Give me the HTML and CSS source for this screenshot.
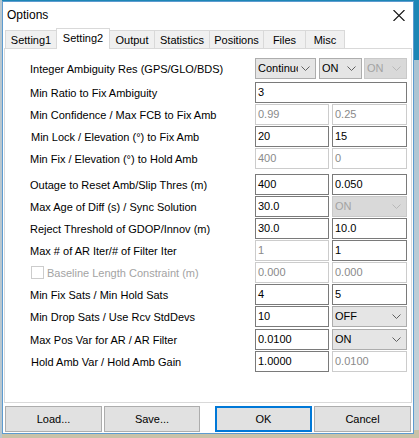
FILE: index.html
```html
<!DOCTYPE html>
<html>
<head>
<meta charset="utf-8">
<title>Options</title>
<link rel="stylesheet" href="styles.css">
</head>
<body>
<div class="window">
  <div class="titlebar">
    <span class="title">Options</span>
    <svg class="close" width="12" height="11" viewBox="0 0 12 11"><path d="M0.5 0 L11.5 11 M11.5 0 L0.5 11" stroke="#111" stroke-width="1.1" fill="none"/></svg>
  </div>
  <div class="tabs">
    <div class="tab w51">Setting1</div>
    <div class="tab active w54">Setting2</div>
    <div class="tab w44">Output</div>
    <div class="tab w55">Statistics</div>
    <div class="tab w54">Positions</div>
    <div class="tab w42">Files</div>
    <div class="tab w40">Misc</div>
  </div>
  <div class="panel">
    <div class="row">
      <span class="label">Integer Ambiguity Res (GPS/GLO/BDS)</span>
      <div class="ctrls three">
        <div class="combo w61"><span class="ctext">Continuous</span><svg class="chev" width="9" height="5" viewBox="0 0 9 5"><path d="M0.5 0.5 L4.5 4.5 L8.5 0.5" stroke="#606060" fill="none"/></svg></div>
        <div class="combo w43 ml3"><span class="ctext">ON</span><svg class="chev" width="9" height="5" viewBox="0 0 9 5"><path d="M0.5 0.5 L4.5 4.5 L8.5 0.5" stroke="#606060" fill="none"/></svg></div>
        <div class="combo dis w43 ml2"><span class="ctext">ON</span><svg class="chev" width="9" height="5" viewBox="0 0 9 5"><path d="M0.5 0.5 L4.5 4.5 L8.5 0.5" stroke="#b8b8b8" fill="none"/></svg></div>
      </div>
    </div>
    <div class="row gap4">
      <span class="label">Min Ratio to Fix Ambiguity</span>
      <div class="ctrls"><div class="edit full">3</div></div>
    </div>
    <div class="row">
      <span class="label">Min Confidence / Max FCB to Fix Amb</span>
      <div class="ctrls two"><div class="edit dis">0.99</div><div class="edit dis">0.25</div></div>
    </div>
    <div class="row">
      <span class="label ind">Min Lock / Elevation (°) to Fix Amb</span>
      <div class="ctrls two"><div class="edit">20</div><div class="edit">15</div></div>
    </div>
    <div class="row">
      <span class="label">Min Fix / Elevation (°) to Hold Amb</span>
      <div class="ctrls two"><div class="edit dis">400</div><div class="edit dis">0</div></div>
    </div>
    <div class="row gap6">
      <span class="label">Outage to Reset Amb/Slip Thres (m)</span>
      <div class="ctrls two"><div class="edit">400</div><div class="edit">0.050</div></div>
    </div>
    <div class="row">
      <span class="label">Max Age of Diff (s) / Sync Solution</span>
      <div class="ctrls two"><div class="edit">30.0</div><div class="combo dis"><span class="ctext">ON</span><svg class="chev" width="9" height="5" viewBox="0 0 9 5"><path d="M0.5 0.5 L4.5 4.5 L8.5 0.5" stroke="#b8b8b8" fill="none"/></svg></div></div>
    </div>
    <div class="row">
      <span class="label">Reject Threshold of GDOP/Innov (m)</span>
      <div class="ctrls two"><div class="edit">30.0</div><div class="edit">10.0</div></div>
    </div>
    <div class="row">
      <span class="label">Max # of AR Iter/# of Filter Iter</span>
      <div class="ctrls two"><div class="edit dis">1</div><div class="edit">1</div></div>
    </div>
    <div class="row">
      <span class="label dlabel"><span class="check"></span>Baseline Length Constraint (m)</span>
      <div class="ctrls two"><div class="edit dis">0.000</div><div class="edit dis">0.000</div></div>
    </div>
    <div class="row">
      <span class="label">Min Fix Sats / Min Hold Sats</span>
      <div class="ctrls two"><div class="edit">4</div><div class="edit">5</div></div>
    </div>
    <div class="row">
      <span class="label">Min Drop Sats / Use Rcv StdDevs</span>
      <div class="ctrls two"><div class="edit">10</div><div class="combo"><span class="ctext">OFF</span><svg class="chev" width="9" height="5" viewBox="0 0 9 5"><path d="M0.5 0.5 L4.5 4.5 L8.5 0.5" stroke="#606060" fill="none"/></svg></div></div>
    </div>
    <div class="row gap3">
      <span class="label">Max Pos Var for AR / AR Filter</span>
      <div class="ctrls two"><div class="edit">0.0100</div><div class="combo"><span class="ctext">ON</span><svg class="chev" width="9" height="5" viewBox="0 0 9 5"><path d="M0.5 0.5 L4.5 4.5 L8.5 0.5" stroke="#606060" fill="none"/></svg></div></div>
    </div>
    <div class="row">
      <span class="label ind">Hold Amb Var / Hold Amb Gain</span>
      <div class="ctrls two"><div class="edit">1.0000</div><div class="edit dis">0.0100</div></div>
    </div>
  </div>
  <div class="buttons">
    <button class="btn w97">Load...</button>
    <button class="btn w96 ml2">Save...</button>
    <button class="btn w97 default ml15">OK</button>
    <button class="btn w97 ml2">Cancel</button>
  </div>
</div>
</body>
</html>
```
FILE: styles.css
```css
* { box-sizing: border-box; }
html, body { margin: 0; padding: 0; }
body {
  width: 419px;
  height: 438px;
  overflow: hidden;
  font-family: "Liberation Sans", Arial, sans-serif;
  font-size: 11px;
  color: #000;
  background: linear-gradient(to right, #b9c7cf 0, #b9c7cf 2px, transparent 2px),
              linear-gradient(to bottom, #1d86b5 0, #1d86b5 60px, #a9c3d2 60px, #c8d3d8 430px, #c9c2a8 430px);
}
.window {
  margin: 1px 0 0 2px;
  width: 412px;
  height: 433px;
  border: 1px solid #5d9bd0;
  background: #fff;
  display: flex;
  flex-direction: column;
}
.titlebar {
  height: 26px;
  flex: none;
  display: flex;
  align-items: center;
  justify-content: space-between;
  padding: 0 8px 0 4px;
}
.title { font-size: 12px; }
.close { display: block; }
.tabs {
  height: 20px;
  flex: none;
  display: flex;
  padding-left: 2px;
  position: relative;
  z-index: 1;
}
.tab {
  margin-top: 2px;
  height: 18px;
  border: 1px solid #d9d9d9;
  border-bottom: none;
  border-right: none;
  background: #f0f0f0;
  text-align: center;
  padding-top: 3px;
  line-height: 13px;
}
.tab:last-child { border-right: 1px solid #d9d9d9; }
.tab.active {
  margin-top: 0;
  height: 21px;
  background: #fff;
  border-right: 1px solid #d9d9d9;
  padding-top: 3px;
}
.tab.active + .tab { border-left: none; }
.w40 { width: 40px; } .w42 { width: 42px; } .w43 { width: 43px; } .w44 { width: 44px; }
.w51 { width: 51px; } .w54 { width: 54px; } .w55 { width: 55px; } .w61 { width: 61px; }
.w96 { width: 96px; } .w97 { width: 97px; }
.ml2 { margin-left: 2px; } .ml3 { margin-left: 3px; } .ml15 { margin-left: 15px; }
.panel {
  margin: 0 1px;
  height: 355px;
  flex: none;
  border: 1px solid #d9d9d9;
  background: #fff;
  padding: 9px 4px 0 25px;
}
.row {
  display: flex;
  align-items: center;
  justify-content: space-between;
  height: 21px;
  margin-bottom: 1px;
}
.gap4 { margin-top: 3px; }
.gap6 { margin-top: 5px; }
.gap3 { margin-top: 2px; }
.label { white-space: nowrap; }
.ind { padding-left: 1px; }
.dlabel { color: #a3a3a3; display: flex; align-items: center; padding-left: 1px; }
.check {
  width: 13px;
  height: 13px;
  border: 1px solid #cccccc;
  background: #fff;
  margin-right: 3px;
}
.ctrls {
  width: 152px;
  height: 21px;
  display: flex;
}
.ctrls.two { display: grid; grid-template-columns: 74px 75px; column-gap: 3px; }
.edit {
  height: 21px;
  border: 1px solid #7a7a7a;
  background: #fff;
  padding: 0 2px;
  line-height: 19px;
  white-space: nowrap;
  overflow: hidden;
}
.edit.full { width: 152px; }
.edit.dis { border-color: #cccccc; color: #8a8a8a; }
.combo {
  height: 21px;
  border: 1px solid #adadad;
  background: #e5e5e5;
  display: flex;
  align-items: center;
  padding: 0 5px 0 2px;
  line-height: 19px;
}
.combo.dis { border-color: #c9c9c9; background: #d9d9d9; color: #a3a3a3; }
.ctext { flex: 1; overflow: hidden; white-space: nowrap; min-width: 0; }
.chev { display: block; flex: none; margin-left: 3px; }
.buttons {
  margin-top: 3px;
  display: flex;
  padding-left: 2px;
  height: 26px;
  flex: none;
}
.btn {
  height: 26px;
  border: 1px solid #adadad;
  background: #e1e1e1;
  font-family: inherit;
  font-size: 11px;
  color: #000;
  padding: 0;
  margin-top: 0;
  margin-bottom: 0;
}
.btn.default { border: 2px solid #0078d7; }
```
